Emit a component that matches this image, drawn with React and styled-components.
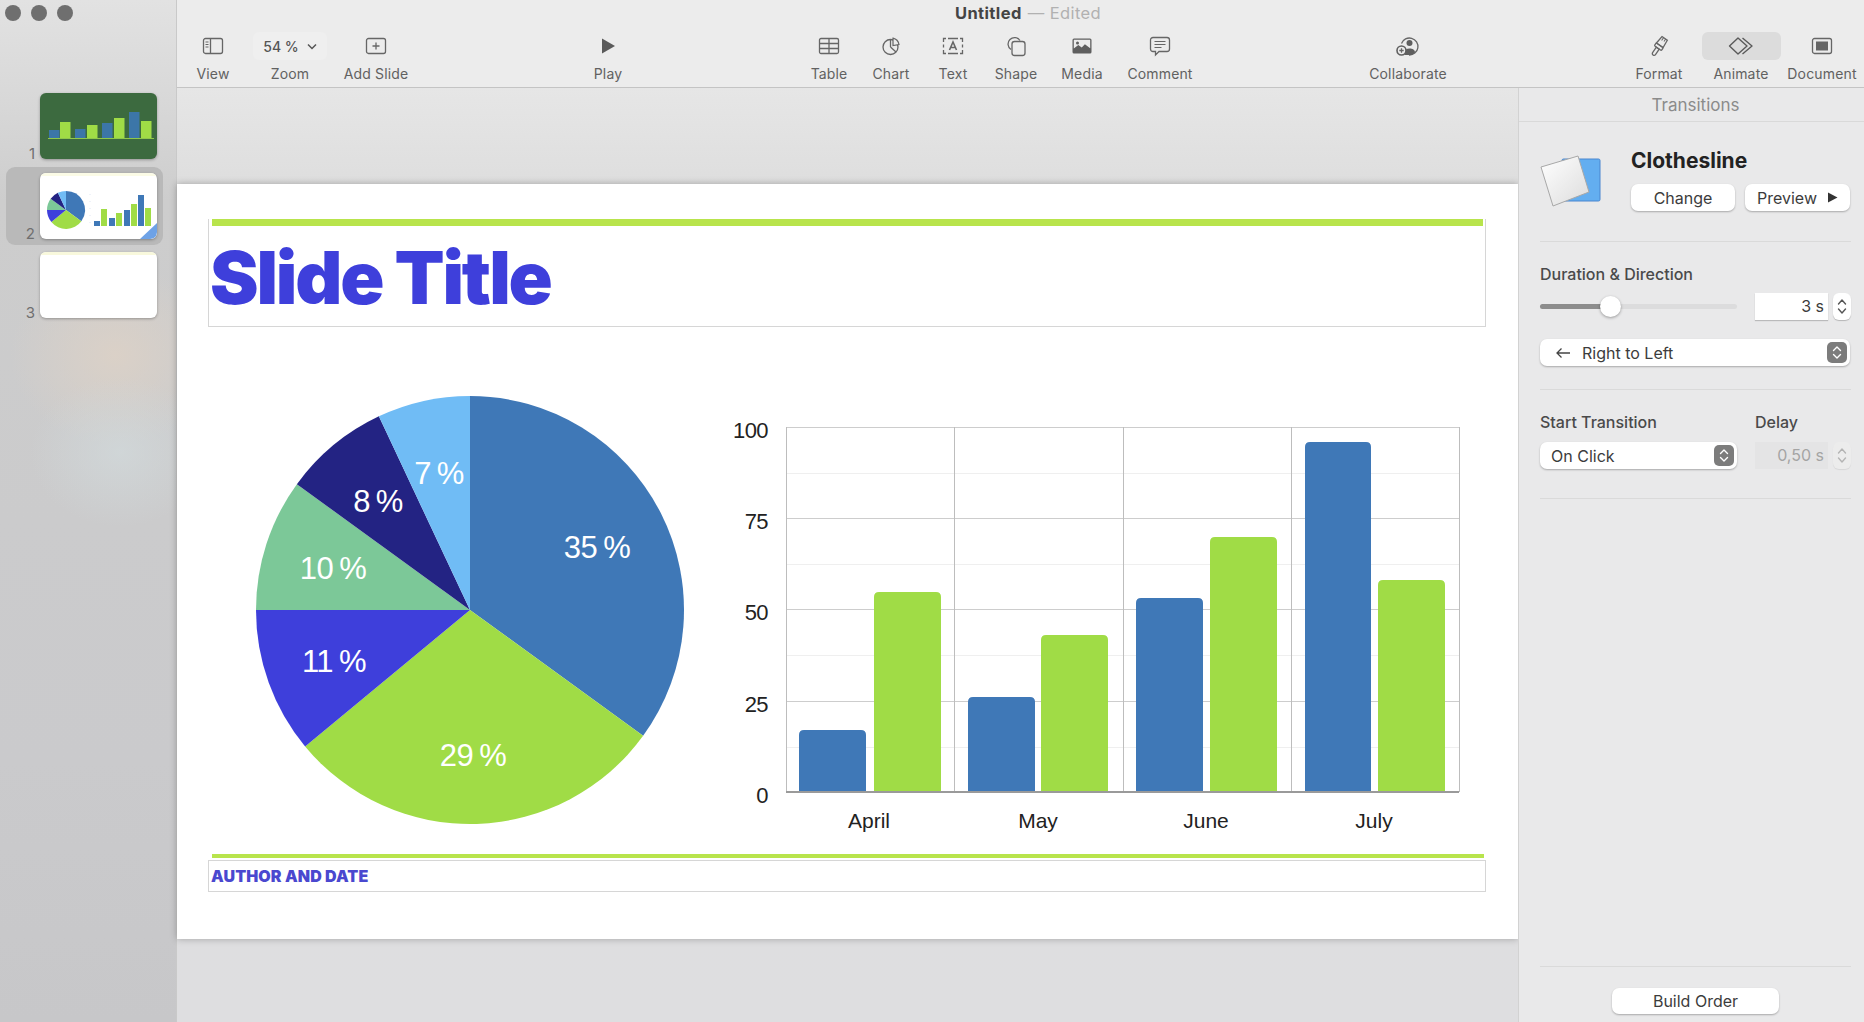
import React from "react";
import styled, { createGlobalStyle } from "styled-components";

const GlobalStyle = createGlobalStyle`
  html, body {
    margin: 0;
    padding: 0;
    width: 1864px;
    height: 1022px;
    overflow: hidden;
    background: #ececec;
    font-family: Inter, "Liberation Sans", sans-serif;
  }
  * { box-sizing: border-box; }
`;

const BLUE = "#3f78b7";
const GREEN = "#a0dc46";
const INDIGO = "#3e3fdb";
const TEAL = "#7cc898";
const NAVY = "#232383";
const SKY = "#70bcf5";

const Window = styled.div`
  display: flex;
  width: 1864px;
  height: 1022px;
`;

const Sidebar = styled.aside`
  flex: 0 0 177px;
  display: flex;
  flex-direction: column;
  gap: 1px;
  border-right: 1px solid #c9c9c9;
  background:
    radial-gradient(ellipse 90px 75px at 120px 452px, rgba(210, 218, 220, 0.7), rgba(210, 218, 220, 0)),
    radial-gradient(ellipse 105px 90px at 115px 355px, rgba(222, 210, 198, 0.8), rgba(222, 210, 198, 0)),
    linear-gradient(180deg, #e2e2e2 0, #d8d8d8 100px, #cdcdcd 200px, #cbcbcc 520px, #cacacc 760px, #c7c7c9 1022px);
`;

const Lights = styled.div`
  display: flex;
  gap: 10px;
  padding: 5px 0 0 5px;
  height: 86px;
`;

const Light = styled.span`
  width: 16px;
  height: 16px;
  border-radius: 50%;
  background: #6f6f6f;
`;

const SlideRow = styled.div`
  display: flex;
  align-items: flex-end;
  width: 157px;
  height: 78px;
  margin-left: 6px;
  margin-top: ${(p) => (p.$selected ? "1px" : "0")};
  padding: 6px 6px 6px 0;
  border-radius: 9px;
  background: ${(p) => (p.$selected ? "#b9b9b9" : "transparent")};
`;

const SlideNum = styled.span`
  flex: 0 0 29px;
  margin: 0 5px -3px 0;
  text-align: right;
  font-size: 15px;
  line-height: 17px;
  color: #6f6f6f;
`;

const Thumb = styled.div`
  width: 117px;
  height: 66px;
  border-radius: 6px;
  overflow: hidden;
  background: ${(p) => p.$bg};
  box-shadow: 0 1px 3px rgba(0, 0, 0, 0.3);
  svg { display: block; }
`;

const Main = styled.div`
  flex: 1;
  display: flex;
  flex-direction: column;
  min-width: 0;
`;

const Toolbar = styled.header`
  flex: 0 0 88px;
  background: #ececec;
  border-bottom: 1px solid #c4c4c4;
`;

const DocTitle = styled.div`
  height: 26px;
  padding: 3px 0 0 15px;
  text-align: center;
  font-size: 16.5px;
  line-height: 20px;
  letter-spacing: 0.4px;
  font-weight: 700;
  color: #444;
  span { font-weight: 400; color: #b1b1b1; margin-left: 6px; }
`;

const ToolRow = styled.div`
  display: flex;
  align-items: flex-start;
  height: 60px;
  padding-top: 6px;
`;

const Tool = styled.div`
  flex: 0 0 ${(p) => p.$w}px;
  margin-left: ${(p) => p.$ml || 0}px;
  display: flex;
  flex-direction: column;
  align-items: center;
`;

const ToolIcon = styled.div`
  display: flex;
  align-items: center;
  justify-content: center;
  height: 28px;
  width: ${(p) => (p.$pill ? "79px" : "auto")};
  border-radius: 6px;
  background: ${(p) => (p.$pill ? "#dcdcdc" : "transparent")};
`;

const ZoomPill = styled.div`
  display: flex;
  align-items: center;
  justify-content: center;
  gap: 8px;
  width: 74px;
  height: 28px;
  border-radius: 6px;
  background: #efefef;
  font-size: 14px;
  font-weight: 500;
  color: #555;
`;

const ToolLabel = styled.div`
  margin-top: 5px;
  font-size: 14px;
  line-height: 18px;
  letter-spacing: 0.15px;
  white-space: nowrap;
  color: #616161;
`;

const Body = styled.div`
  flex: 1;
  display: flex;
  min-height: 0;
`;

const Canvas = styled.main`
  flex: 1;
  padding-top: 96px;
  min-width: 0;
  background:
    radial-gradient(ellipse 400px 60px at 330px 1022px, rgba(200, 200, 200, 0.7), rgba(200, 200, 200, 0)),
    linear-gradient(180deg, #e6e6e6 0, #dedede 96px, #dedee0 100%);
`;

const Slide = styled.section`
  height: 755px;
  padding: 35px 32px 0 31px;
  background: #fff;
  box-shadow: 0 0 7px rgba(0, 0, 0, 0.28);
`;

const TitleBox = styled.div`
  height: 108px;
  border: 1px solid #d6d6d6;
  border-top: 0;
`;

const AccentBar = styled.div`
  height: ${(p) => p.$h}px;
  margin: 0 ${(p) => p.$right}px 0 ${(p) => p.$left}px;
  background: #b8e44c;
`;

const SlideTitle = styled.h1`
  margin: 12px 0 0 1px;
  font-family: Inter, "Liberation Sans", sans-serif;
  font-weight: 900;
  font-size: 73px;
  line-height: 80px;
  letter-spacing: -2.2px;
  color: ${INDIGO};
`;

const ChartRow = styled.div`
  display: flex;
  align-items: flex-start;
  gap: 35px;
  height: 527px;
  padding: 68px 0 0 47px;
  svg { display: block; }
`;

const BarWrap = styled.div`
  margin-top: 15px;
`;

const FooterBox = styled.div`
  height: 32px;
  margin-top: 2px;
  padding-left: 2px;
  border: 1px solid #d6d6d6;
  font-family: Inter, "Liberation Sans", sans-serif;
  font-weight: 900;
  font-size: 16px;
  line-height: 30px;
  letter-spacing: 0.1px;
  color: #4a48cf;
`;

const Inspector = styled.aside`
  flex: 0 0 344px;
  display: flex;
  flex-direction: column;
  background: #e9e9ea;
  border-left: 1px solid #d2d2d2;
`;

const TabHeader = styled.div`
  flex: 0 0 34px;
  padding: 2px 0 0 8px;
  border-bottom: 1px solid #d9d9d9;
  text-align: center;
  font-size: 17px;
  line-height: 31px;
  color: #8b8b8b;
`;

const Section = styled.div`
  margin: 0 13px 0 21px;
  padding: ${(p) => p.$pad};
  border-bottom: 1px solid #dadada;
`;

const EffectRow = styled.div`
  display: flex;
  align-items: flex-start;
  gap: 30px;
`;

const EffectIcon = styled.div`
  flex: 0 0 61px;
  margin-top: 5px;
  svg { display: block; }
`;

const EffectName = styled.div`
  font-size: 21px;
  line-height: 24px;
  font-weight: 700;
  color: #222;
`;

const ButtonRow = styled.div`
  display: flex;
  gap: 10px;
  margin-top: 11px;
`;

const Button = styled.button`
  display: flex;
  align-items: center;
  justify-content: center;
  gap: 10px;
  width: ${(p) => p.$w}px;
  height: ${(p) => p.$h || 27}px;
  padding: 0;
  border: 0;
  border-radius: 7px;
  background: #fff;
  box-shadow: 0 1px 2px rgba(0, 0, 0, 0.28);
  font-family: inherit;
  font-size: 16px;
  color: #3c3c3c;
`;

const FieldLabel = styled.div`
  flex: 0 0 ${(p) => p.$w || "auto"};
  font-size: 16px;
  line-height: 18px;
  font-weight: 500;
  color: #4a4a4a;
`;

const Controls = styled.div`
  display: flex;
  align-items: center;
  margin-top: ${(p) => p.$mt}px;
`;

const SliderTrack = styled.div`
  position: relative;
  flex: 0 0 197px;
  height: 5px;
  border-radius: 3px;
  background: #dcdcdd;
`;

const SliderFill = styled.div`
  height: 5px;
  border-radius: 3px;
  background: #8d8d8d;
`;

const SliderThumb = styled.div`
  position: absolute;
  top: -8px;
  width: 21px;
  height: 21px;
  border-radius: 50%;
  background: #fff;
  box-shadow: 0 1px 3px rgba(0, 0, 0, 0.35);
`;

const NumberField = styled.div`
  width: 73px;
  height: 27px;
  margin-left: 18px;
  padding-right: 4px;
  text-align: right;
  font-size: 16px;
  line-height: 27px;
  color: ${(p) => (p.$disabled ? "#a4a4a4" : "#3c3c3c")};
  background: ${(p) => (p.$disabled ? "#e4e4e5" : "#fff")};
  box-shadow: ${(p) => (p.$disabled ? "none" : "0 1px 1px rgba(0, 0, 0, 0.2)")};
`;

const Stepper = styled.div`
  display: flex;
  align-items: center;
  justify-content: center;
  width: 18px;
  height: 27px;
  margin-left: 5px;
  border-radius: 6px;
  background: ${(p) => (p.$disabled ? "#ececec" : "#fff")};
  box-shadow: 0 1px 1px rgba(0, 0, 0, ${(p) => (p.$disabled ? 0.08 : 0.22)});
`;

const Select = styled.div`
  display: flex;
  align-items: center;
  width: ${(p) => p.$w}px;
  height: 27px;
  padding: 0 3px 0 ${(p) => p.$pl}px;
  border-radius: 7px;
  background: #fff;
  box-shadow: 0 1px 2px rgba(0, 0, 0, 0.28);
  font-size: 16px;
  color: #3c3c3c;
`;

const SelectText = styled.span`
  flex: 1;
`;

const SelectArrow = styled.span`
  display: flex;
  align-items: center;
  justify-content: center;
  width: 20px;
  height: 21px;
  border-radius: 5px;
  background: #7c7c7c;
`;

const LabelRow = styled.div`
  display: flex;
`;

const Spacer = styled.div`
  flex: 1;
`;

const FooterSection = styled.div`
  display: flex;
  justify-content: center;
  margin: 0 13px 8px 21px;
  padding-top: 21px;
  border-top: 1px solid #dadada;
`;

const stroke = { fill: "none", stroke: "#666", strokeWidth: 1.3 };

const Ico = ({ w = 22, h = 20, vb, children }) => (
  <svg width={w} height={h} viewBox={vb || `0 0 ${w} ${h}`}>{children}</svg>
);

const icons = {
  view: (
    <Ico>
      <rect x="1.5" y="2.5" width="19" height="15" rx="2" {...stroke} />
      <path d="M8.5 2.5v15" {...stroke} />
      <path d="M3.5 6h3M3.5 8.5h3M3.5 11h3" {...stroke} strokeWidth="1" />
    </Ico>
  ),
  add: (
    <Ico>
      <rect x="1.5" y="2.5" width="19" height="15" rx="2" {...stroke} />
      <path d="M11 6.5v7M7.5 10h7" {...stroke} />
    </Ico>
  ),
  play: (
    <Ico w={16} h={18}>
      <path d="M2 1.5 15 9 2 16.5Z" fill="#5a5a5a" />
    </Ico>
  ),
  table: (
    <Ico>
      <rect x="1.5" y="2.5" width="19" height="15" rx="1.5" {...stroke} />
      <path d="M1.5 7.5h19M1.5 12.5h19M11 2.5v15" {...stroke} />
    </Ico>
  ),
  chart: (
    <Ico>
      <circle cx="10.5" cy="11" r="7.5" {...stroke} />
      <path d="M10.5 11V3.5M10.5 11l5.5 5" {...stroke} />
      <path d="M13 2.2a8 8 0 0 1 6 6.3l-6 1Z" fill="#ececec" stroke="#666" strokeWidth="1.2" />
    </Ico>
  ),
  text: (
    <Ico>
      <path d="M4 2.5H1.5V6M1.5 8.5v3M1.5 14v3.5H4M18 2.5h2.5V6M20.5 8.5v3M20.5 14v3.5H18M6 2.5h10M6 17.5h10" {...stroke} />
      <path d="M7.5 14 11 6l3.5 8M8.8 11.5h4.4" fill="none" stroke="#666" strokeWidth="1.6" />
    </Ico>
  ),
  shape: (
    <Ico h={22}>
      <path d="M6 14.5A6.5 6.5 0 1 1 15 5.5" {...stroke} />
      <rect x="7" y="6.5" width="13" height="14" rx="2.5" {...stroke} />
    </Ico>
  ),
  media: (
    <Ico>
      <path
        fillRule="evenodd"
        fill="#5f5f5f"
        d="M3 2.5h16a1.5 1.5 0 0 1 1.5 1.5v12a1.5 1.5 0 0 1-1.5 1.5H3A1.5 1.5 0 0 1 1.5 16V4A1.5 1.5 0 0 1 3 2.5ZM2.8 3.8v8.7l4.5-3.4 3.4 2.3 3.2-3.2 5.3 4V3.8Z"
      />
      <circle cx="6.5" cy="7" r="1.5" fill="#5f5f5f" />
    </Ico>
  ),
  comment: (
    <Ico h={22}>
      <path d="M4 2.5h14A2.5 2.5 0 0 1 20.5 5v9a2.5 2.5 0 0 1-2.5 2.5H10L6.5 20v-3.5H4A2.5 2.5 0 0 1 1.5 14V5A2.5 2.5 0 0 1 4 2.5Z" {...stroke} />
      <path d="M5.5 6.5h11M5.5 9.5h11M5.5 12.5h7" {...stroke} strokeWidth="1.1" />
    </Ico>
  ),
  collab: (
    <Ico w={24} h={22}>
      <path d="M5.5 8.5A8.5 8.5 0 1 1 13 20" {...stroke} />
      <circle cx="13.5" cy="8" r="3" fill="#5f5f5f" />
      <path d="M8.5 20v-2.5c0-2.6 2-4 5-4s5.5 1.4 5.5 4c-1.5 1.7-3.5 2.6-6 2.6Z" fill="#5f5f5f" />
      <circle cx="5.5" cy="15.5" r="4.5" fill="#ececec" stroke="#5f5f5f" strokeWidth="1.6" />
      <path d="M5.5 13.3v4.4M3.3 15.5h4.4" {...stroke} strokeWidth="1.3" />
    </Ico>
  ),
  format: (
    <Ico w={20} h={24}>
      <g transform="rotate(35 10 12)">
        <path d="M7 2.5h6.5l.8 8.5H6.2Z" {...stroke} />
        <path d="M9 2.5v3.5M11.5 2.5v3" {...stroke} strokeWidth="1" />
        <rect x="6" y="11" width="8.5" height="3.5" rx="1" {...stroke} />
        <path d="M8.5 14.5h3.5v6.5a1.7 1.7 0 0 1-3.5 0Z" {...stroke} />
      </g>
    </Ico>
  ),
  animate: (
    <Ico w={26} h={22}>
      <path d="M10 3 19 11l-9 8-8.5-8Z" fill="none" stroke="#5a5a5a" strokeWidth="1.4" strokeLinejoin="round" />
      <path d="M14.5 3 24 11l-9.5 8" fill="none" stroke="#5a5a5a" strokeWidth="1.4" strokeLinejoin="round" />
    </Ico>
  ),
  document: (
    <Ico>
      <rect x="1.5" y="2.5" width="19" height="15" rx="2" {...stroke} />
      <rect x="5" y="5.5" width="12" height="9" fill="#666" />
    </Ico>
  ),
};

const tools = [
  { label: "View", w: 72, icon: "view" },
  { label: "Zoom", w: 82, zoom: true },
  { label: "Add Slide", w: 90, icon: "add" },
  { label: "Play", w: 60, ml: 157, icon: "play" },
  { label: "Table", w: 60, ml: 161, icon: "table" },
  { label: "Chart", w: 64, icon: "chart" },
  { label: "Text", w: 60, icon: "text" },
  { label: "Shape", w: 66, icon: "shape" },
  { label: "Media", w: 66, icon: "media" },
  { label: "Comment", w: 90, icon: "comment" },
  { label: "Collaborate", w: 110, ml: 148, icon: "collab" },
  { label: "Format", w: 80, ml: 156, icon: "format" },
  { label: "Animate", w: 84, icon: "animate", pill: true },
  { label: "Document", w: 78, icon: "document" },
];

const slices = [
  { pct: 35, color: BLUE, x: 597, y: 547 },
  { pct: 29, color: GREEN, x: 473, y: 755 },
  { pct: 11, color: INDIGO, x: 334, y: 661 },
  { pct: 10, color: TEAL, x: 333, y: 568 },
  { pct: 8, color: NAVY, x: 378, y: 501 },
  { pct: 7, color: SKY, x: 439, y: 473 },
];

function PieSlices({ cx, cy, r }) {
  let start = 0;
  return slices.map((s) => {
    const a0 = (start / 100) * 2 * Math.PI;
    start += s.pct;
    const a1 = (start / 100) * 2 * Math.PI;
    const large = s.pct > 50 ? 1 : 0;
    const d = `M${cx} ${cy}L${cx + r * Math.sin(a0)} ${cy - r * Math.cos(a0)}A${r} ${r} 0 ${large} 1 ${cx + r * Math.sin(a1)} ${cy - r * Math.cos(a1)}Z`;
    return <path key={s.pct} d={d} fill={s.color} />;
  });
}

function BarShape({ x, w, top, base, r = 5, color }) {
  return <path d={`M${x} ${base}V${top + r}Q${x} ${top} ${x + r} ${top}H${x + w - r}Q${x + w} ${top} ${x + w} ${top + r}V${base}Z`} fill={color} />;
}

const bars = [
  [799, 67, 730, BLUE], [874, 67, 592, GREEN],
  [968, 67, 697, BLUE], [1041, 67, 635, GREEN],
  [1136, 67, 598, BLUE], [1210, 67, 537, GREEN],
  [1305, 66, 442, BLUE], [1378, 67, 580, GREEN],
];

const chartFont = { fontFamily: '"Liberation Sans", sans-serif', fill: "#222" };

function PieChart() {
  return (
    <svg width="430" height="430" viewBox="255 395 430 430">
      <PieSlices cx={470} cy={610} r={214} />
      {slices.map((s) => (
        <text
          key={s.pct}
          x={s.x}
          y={s.y + 11}
          textAnchor="middle"
          fontSize="31"
          letterSpacing="-0.6"
          wordSpacing="-2"
          fontFamily='"Liberation Sans", sans-serif'
          fill="#fff"
        >
          {s.pct} %
        </text>
      ))}
    </svg>
  );
}

function BarChart() {
  const major = [427, 518, 609, 701];
  const minor = [473, 564, 655, 747];
  const cols = [786, 954, 1123, 1291, 1459];
  const yLabels = [["100", 438], ["75", 529], ["50", 620], ["25", 712], ["0", 803]];
  const months = [["April", 869], ["May", 1038], ["June", 1206], ["July", 1374]];
  return (
    <svg width="750" height="430" viewBox="720 410 750 430">
      {minor.map((y) => <path key={y} d={`M786 ${y + 0.5}H1459`} stroke="#efefef" />)}
      {major.map((y) => <path key={y} d={`M786 ${y + 0.5}H1459`} stroke="#cdcdcd" />)}
      {cols.map((x) => <path key={x} d={`M${x + 0.5} 427V792`} stroke="#bdbdbd" />)}
      {bars.map(([x, w, top, color]) => <BarShape key={x} x={x} w={w} top={top} base={792} color={color} />)}
      <path d="M786 792H1459" stroke="#9a9a9a" strokeWidth="2" />
      {yLabels.map(([t, y]) => (
        <text key={t} x="768" y={y} textAnchor="end" fontSize="22" letterSpacing="-0.6" {...chartFont}>{t}</text>
      ))}
      {months.map(([t, x]) => (
        <text key={t} x={x} y="828" textAnchor="middle" fontSize="21" {...chartFont}>{t}</text>
      ))}
    </svg>
  );
}

const THUMB_BLUE = "#3c76a8";
const mini1 = [[9, 37, THUMB_BLUE], [20, 29, GREEN], [35, 36, THUMB_BLUE], [47, 32, GREEN], [62, 30, THUMB_BLUE], [74, 25, GREEN], [89, 19, THUMB_BLUE], [101, 28, GREEN]];
const mini2 = [[54, 48, BLUE], [61, 36, GREEN], [69, 45, BLUE], [76, 40, GREEN], [84, 37, BLUE], [91, 31, GREEN], [98, 22, BLUE], [105, 35, GREEN]];

const ThumbOne = () => (
  <svg width="117" height="66">
    {mini1.map(([x, top, color]) => <rect key={x} x={x} y={top} width="10.5" height={45 - top} fill={color} />)}
    <path d="M8 45.5H114" stroke="#8fc84a" strokeWidth="1" />
  </svg>
);

const ThumbTwo = () => (
  <svg width="117" height="66">
    <rect width="117" height="3" fill="#fbfbe6" />
    <PieSlices cx={26} cy={37} r={19} />
    {mini2.map(([x, top, color]) => <rect key={x} x={x} y={top} width="6" height={53 - top} fill={color} />)}
    <path d="M50 21v32" stroke="#dfe6f4" strokeDasharray="1 6" />
    <path d="M100 66 117 50v9q0 7-7 7Z" fill="#6ea2e6" />
  </svg>
);

const ThumbThree = () => (
  <svg width="117" height="66">
    <rect width="117" height="3" fill="#f8f8dc" />
  </svg>
);

const Updown = ({ color = "#555" }) => (
  <svg width="10" height="19" viewBox="0 0 10 19">
    <path d="M1.5 7 5 3l3.5 4M1.5 12 5 16l3.5-4" fill="none" stroke={color} strokeWidth="1.4" strokeLinecap="round" strokeLinejoin="round" />
  </svg>
);

const SelectUpdown = () => (
  <SelectArrow>
    <svg width="10" height="15" viewBox="0 0 10 15">
      <path d="M1.5 5.5 5 2l3.5 3.5M1.5 9.5 5 13l3.5-3.5" fill="none" stroke="#fff" strokeWidth="1.4" strokeLinecap="round" strokeLinejoin="round" />
    </svg>
  </SelectArrow>
);

function ToolItem({ t }) {
  return (
    <Tool $w={t.w} $ml={t.ml}>
      {t.zoom ? (
        <ZoomPill>
          54 %
          <svg width="10" height="7" viewBox="0 0 10 7">
            <path d="M1 1.5 5 5.5l4-4" fill="none" stroke="#555" strokeWidth="1.5" />
          </svg>
        </ZoomPill>
      ) : (
        <ToolIcon $pill={t.pill}>{icons[t.icon]}</ToolIcon>
      )}
      <ToolLabel>{t.label}</ToolLabel>
    </Tool>
  );
}

export default function App() {
  return (
    <Window>
      <GlobalStyle />
      <Sidebar>
        <Lights>
          <Light />
          <Light />
          <Light />
        </Lights>
        <SlideRow>
          <SlideNum>1</SlideNum>
          <Thumb $bg="#3c6a3f"><ThumbOne /></Thumb>
        </SlideRow>
        <SlideRow $selected>
          <SlideNum>2</SlideNum>
          <Thumb $bg="#fff"><ThumbTwo /></Thumb>
        </SlideRow>
        <SlideRow>
          <SlideNum>3</SlideNum>
          <Thumb $bg="#fff"><ThumbThree /></Thumb>
        </SlideRow>
      </Sidebar>

      <Main>
        <Toolbar>
          <DocTitle>
            Untitled<span>— Edited</span>
          </DocTitle>
          <ToolRow>
            {tools.map((t) => <ToolItem key={t.label} t={t} />)}
          </ToolRow>
        </Toolbar>

        <Body>
          <Canvas>
            <Slide>
              <TitleBox>
                <AccentBar $h={7} $left={3} $right={2} />
                <SlideTitle>Slide Title</SlideTitle>
              </TitleBox>
              <ChartRow>
                <PieChart />
                <BarWrap>
                  <BarChart />
                </BarWrap>
              </ChartRow>
              <AccentBar $h={4} $left={4} $right={2} />
              <FooterBox>AUTHOR AND DATE</FooterBox>
            </Slide>
          </Canvas>

          <Inspector>
            <TabHeader>Transitions</TabHeader>

            <Section $pad="27px 0 30px">
              <EffectRow>
                <EffectIcon>
                  <svg width="61" height="54" viewBox="0 0 61 54">
                    <defs>
                      <linearGradient id="sheet" x1="0" y1="0" x2="1" y2="1">
                        <stop offset="0" stopColor="#ffffff" />
                        <stop offset="1" stopColor="#dcdcdc" />
                      </linearGradient>
                    </defs>
                    <rect x="22" y="5" width="38" height="42" rx="1.5" fill="#63aef0" stroke="#4a86cf" />
                    <path d="M1 13 38 2l11 36-36 14Z" fill="url(#sheet)" stroke="#a8a8a8" strokeLinejoin="round" />
                  </svg>
                </EffectIcon>
                <div>
                  <EffectName>Clothesline</EffectName>
                  <ButtonRow>
                    <Button $w={104}>Change</Button>
                    <Button $w={105}>
                      Preview
                      <svg width="11" height="11" viewBox="0 0 11 11">
                        <path d="M1 .5 10.5 5.5 1 10.5Z" fill="#333" />
                      </svg>
                    </Button>
                  </ButtonRow>
                </div>
              </EffectRow>
            </Section>

            <Section $pad="23px 0 23px">
              <FieldLabel>Duration &amp; Direction</FieldLabel>
              <Controls $mt={10}>
                <SliderTrack>
                  <SliderFill style={{ width: 66 }} />
                  <SliderThumb style={{ left: 60 }} />
                </SliderTrack>
                <NumberField>3 s</NumberField>
                <Stepper><Updown /></Stepper>
              </Controls>
              <Controls $mt={19}>
                <Select $w={310} $pl={15}>
                  <svg width="16" height="12" viewBox="0 0 16 12" style={{ marginRight: 11 }}>
                    <path d="M15 6H2M6.5 1.5 2 6l4.5 4.5" fill="none" stroke="#444" strokeWidth="1.3" />
                  </svg>
                  <SelectText>Right to Left</SelectText>
                  <SelectUpdown />
                </Select>
              </Controls>
            </Section>

            <Section $pad="23px 0 29px">
              <LabelRow>
                <FieldLabel $w="215px">Start Transition</FieldLabel>
                <FieldLabel>Delay</FieldLabel>
              </LabelRow>
              <Controls $mt={11}>
                <Select $w={197} $pl={11}>
                  <SelectText>On Click</SelectText>
                  <SelectUpdown />
                </Select>
                <NumberField $disabled>0,50 s</NumberField>
                <Stepper $disabled><Updown color="#b4b4b4" /></Stepper>
              </Controls>
            </Section>

            <Spacer />

            <FooterSection>
              <Button $w={167} $h={26}>Build Order</Button>
            </FooterSection>
          </Inspector>
        </Body>
      </Main>
    </Window>
  );
}
